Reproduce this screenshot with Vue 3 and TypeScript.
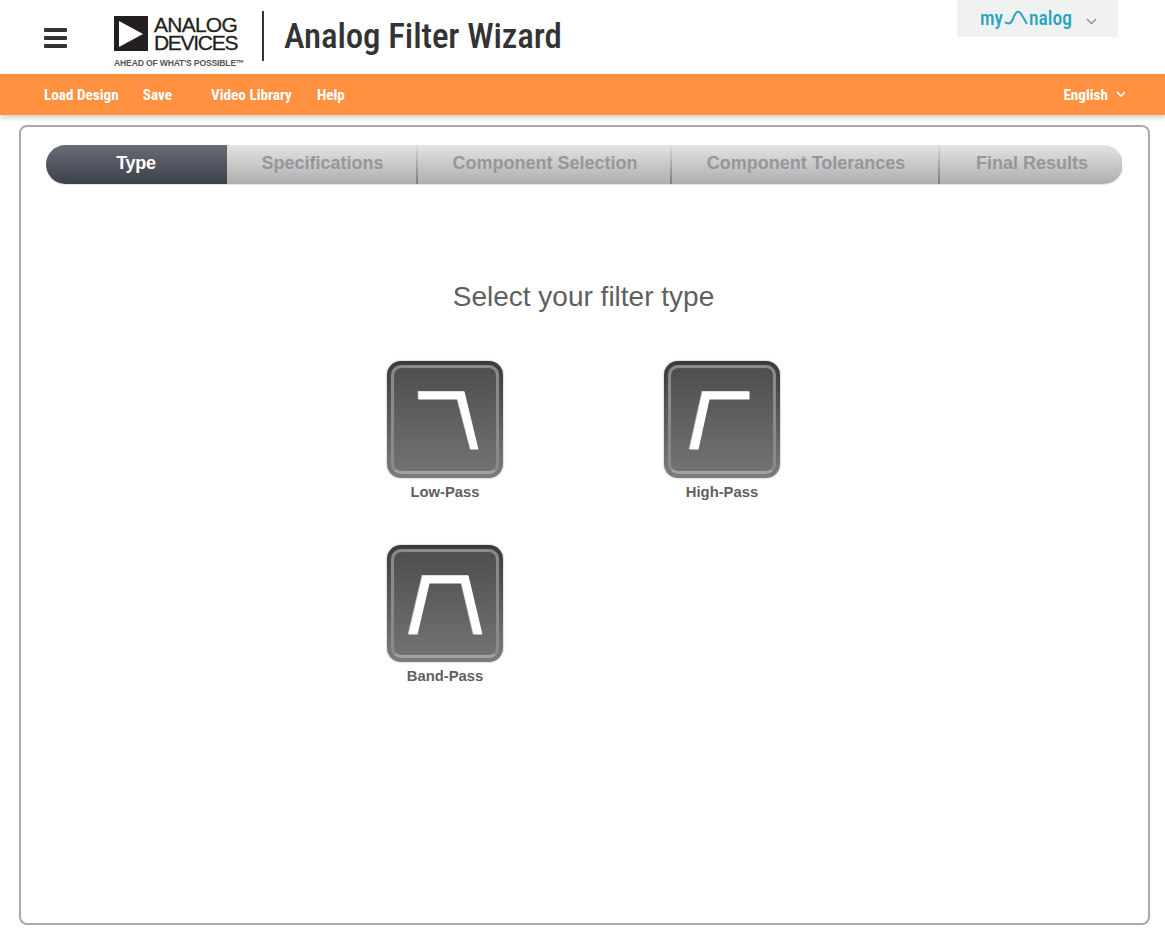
<script setup lang="ts">
interface Tab { label: string; width: number; active?: boolean }
interface Filter { label: string; points: string }

const navLinks: string[] = ['Load Design', 'Save', 'Video Library', 'Help']

const tabs: Tab[] = [
  { label: 'Type', width: 181, active: true },
  { label: 'Specifications', width: 189 },
  { label: 'Component Selection', width: 254 },
  { label: 'Component Tolerances', width: 268 },
  { label: 'Final Results', width: 184 },
]

const filters: Filter[] = [
  { label: 'Low-Pass', points: '31,30 77,30 91,88 83,88 70,38 31,38' },
  { label: 'High-Pass', points: '38,30 85,30 85,38 45,38 34,88 25,88' },
  { label: 'Band-Pass', points: '35,30 81,30 95,89 86,89 74,38 42,38 30,89 21,89' },
]
</script>

<template>
  <div class="page">
    <header class="top">
      <div class="burger"><span></span><span></span><span></span></div>
      <div class="logo">
        <div class="logo-main">
          <svg class="logo-mark" width="34" height="35" viewBox="0 0 34 35">
            <rect width="34" height="35" fill="#231f20" />
            <polygon points="5,5 5,31 29,18" fill="#fff" />
          </svg>
          <div class="logo-words">
            <span class="word-a">ANALOG</span>
            <span class="word-d">DEVICES</span>
          </div>
        </div>
        <div class="logo-tag">AHEAD OF WHAT'S POSSIBLE™</div>
      </div>
      <div class="divider"></div>
      <h1 class="app-title">Analog Filter Wizard</h1>
      <div class="account">
        <span class="my">my</span>
        <svg class="wave" width="26" height="20" viewBox="0 0 26 20">
          <path d="M2 13 Q7 17 10 10 C12 4 14 2 16 3 C18 3 19 7 24 15" fill="none" stroke="#2aa3c0" stroke-width="2" />
        </svg>
        <span class="my">nalog</span>
        <svg class="account-chev" width="11" height="7" viewBox="0 0 11 7">
          <path d="M1 1 L5.5 5.5 L10 1" fill="none" stroke="#8a8a8a" stroke-width="1.3" />
        </svg>
      </div>
    </header>

    <nav class="bar">
      <a v-for="link in navLinks" :key="link" class="bar-link">{{ link }}</a>
      <a class="lang">
        English
        <svg width="10" height="7" viewBox="0 0 10 7">
          <path d="M1 1 L5 5 L9 1" fill="none" stroke="#fff" stroke-width="1.6" />
        </svg>
      </a>
    </nav>

    <main class="card">
      <div class="tabs">
        <div
          v-for="tab in tabs"
          :key="tab.label"
          class="tab"
          :class="{ active: tab.active }"
          :style="{ width: tab.width + 'px' }"
        >{{ tab.label }}</div>
      </div>

      <h2 class="heading">Select your filter type</h2>

      <div class="filters">
        <div v-for="filter in filters" :key="filter.label" class="filter">
          <div class="tile">
            <div class="tile-inner"></div>
            <svg class="curve" width="116" height="117" viewBox="0 0 116 117">
              <polygon :points="filter.points" fill="#b9c7a4" transform="translate(-0.3 0)" />
              <polygon :points="filter.points" fill="#fff" transform="translate(0.5 0.5)" />
            </svg>
          </div>
          <div class="filter-label">{{ filter.label }}</div>
        </div>
      </div>
    </main>
  </div>
</template>

<style>
html, body { margin: 0; background: #fff; }
</style>

<style scoped>
.page {
  width: 1165px;
  height: 946px;
  overflow: hidden;
  background: #fff;
  font-family: "Liberation Sans", Arial, sans-serif;
}
.top {
  height: 74px;
  display: flex;
  align-items: flex-start;
  padding-left: 44px;
  box-sizing: border-box;
}
.burger {
  width: 23px;
  margin-top: 28px;
  display: flex;
  flex-direction: column;
  gap: 4px;
}
.burger span { height: 4px; background: #333; border-radius: 1px; }
.logo { margin-left: 47px; margin-top: 16px; width: 130px; }
.logo-main { display: flex; gap: 6px; }
.logo-mark { flex: none; }
.logo-words {
  display: flex;
  flex-direction: column;
  font-size: 21px;
  line-height: 18px;
  color: #231f20;
  -webkit-text-stroke: 0.3px #231f20;
  text-align: right;
  width: 83px;
  white-space: nowrap;
}
.word-a { letter-spacing: -0.75px; }
.word-d { letter-spacing: -1.3px; }
.logo-tag {
  margin-top: 6px;
  font-size: 8.6px;
  line-height: 10px;
  font-weight: 700;
  color: #555;
  white-space: nowrap;
  letter-spacing: -0.17px;
}
.divider { width: 2px; height: 50px; background: #333; margin-top: 11px; margin-left: 18px; }
.app-title {
  margin: 14px 0 0 20px;
  font-family: "Roboto", sans-serif;
  font-stretch: 75%;
  font-weight: 500;
  font-size: 35px;
  line-height: 46px;
  letter-spacing: -0.15px;
  color: #333;
  white-space: nowrap;
}
.account {
  position: absolute;
  left: 957px;
  top: 0;
  width: 161px;
  height: 37px;
  background: #f0f2f2;
  display: flex;
  align-items: center;
  padding-left: 23px;
  box-sizing: border-box;
}
.my {
  font-family: "Roboto", sans-serif;
  font-stretch: 87%;
  font-size: 19.5px;
  color: #2aa3c0;
  font-weight: 500;
}
.wave { flex: none; }
.account-chev { margin-left: 14px; margin-top: 5px; }
.bar {
  height: 41px;
  background: #ff9140;
  box-shadow: 0 3px 5px rgba(0, 0, 0, 0.18);
  display: flex;
  align-items: center;
  padding: 0 39px 0 44px;
  position: relative;
  font-family: "Roboto", sans-serif;
  font-stretch: 75%;
  font-size: 15.2px;
  font-weight: 700;
  color: #fff;
}
.bar-link { margin-right: 25px; white-space: nowrap; }
.bar-link:nth-child(1) { margin-right: 24px; }
.bar-link:nth-child(2) { margin-right: 39px; }
.lang { margin-left: auto; display: flex; align-items: center; gap: 8px; }
.card {
  margin: 10px 0 0 19px;
  width: 1131px;
  height: 800px;
  box-sizing: border-box;
  border: 2px solid #a9a9a9;
  border-radius: 8px;
  padding: 18px 25px 0;
}
.tabs {
  display: flex;
  height: 39px;
  border-radius: 20px;
  overflow: hidden;
  box-shadow: 0 1px 1px rgba(0, 0, 0, 0.12);
}
.tab {
  box-sizing: border-box;
  flex: none;
  display: flex;
  align-items: center;
  justify-content: center;
  padding: 0 0 2px 2px;
  background: linear-gradient(#e3e3e3, #aeaeae);
  border-left: 2px solid;
  border-image: linear-gradient(#dedede, #777) 1;
  font-size: 18px;
  font-weight: 700;
  color: #96969c;
}
.tab:nth-child(2) { border-left: 0; }
.tab.active {
  background: linear-gradient(#686c75, #3c404a);
  border-left: 0;
  color: #fff;
  letter-spacing: -0.3px;
  padding: 0 1px 2px 0;
}
.heading {
  margin: 96px 2px 0 0;
  text-align: center;
  font-size: 28px;
  line-height: 34px;
  font-weight: 400;
  color: #5f5f5f;
}
.filters {
  margin: 47px 2px 0 0;
  display: grid;
  grid-template-columns: 116px 116px;
  column-gap: 161px;
  row-gap: 41px;
  justify-content: center;
}
.filter { height: 143px; }
.tile {
  position: relative;
  width: 116px;
  height: 117px;
  border-radius: 14px;
  background: linear-gradient(#3a3a3a, #7c7c7c);
  box-shadow: 0 0 2px rgba(70, 70, 70, 0.55);
}
.tile-inner {
  position: absolute;
  inset: 4px;
  border: 3px solid #8a8a8a;
  border-bottom-color: #a2a2a2;
  border-radius: 10px;
  background: linear-gradient(#4e4e4e, #727272);
  box-shadow: 0 0 1px #777, inset 0 0 1px #777;
}
.curve { position: absolute; left: 0; top: 0; }
.filter-label {
  margin-top: 6px;
  text-align: center;
  font-size: 14.8px;
  line-height: 16px;
  font-weight: 700;
  color: #5f5f5f;
}
</style>
